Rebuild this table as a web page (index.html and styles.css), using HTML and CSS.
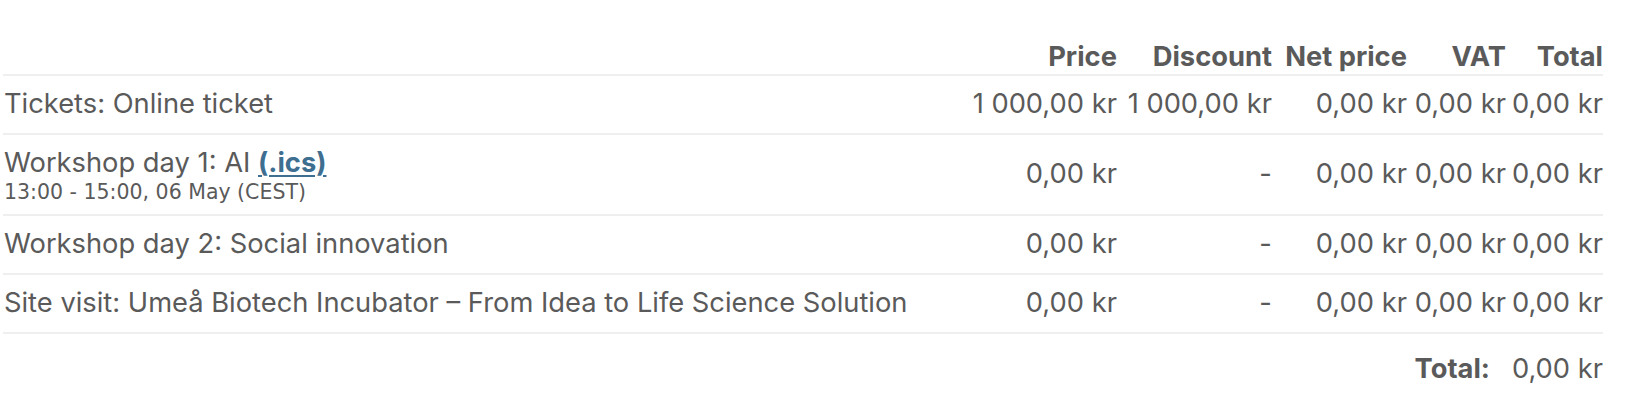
FILE: index.html
```html
<!DOCTYPE html>
<html lang="en">
<head>
<meta charset="utf-8">
<title>Order summary</title>
<link rel="stylesheet" href="styles.css">
</head>
<body>
<div class="order">
  <table class="order-table">
    <thead>
      <tr>
        <th class="col-desc"></th>
        <th class="num">Price</th>
        <th class="num w-discount">Discount</th>
        <th class="num w-net">Net price</th>
        <th class="num w-vat">VAT</th>
        <th class="num w-total">Total</th>
      </tr>
    </thead>
    <tbody>
      <tr>
        <td class="col-desc">Tickets: Online ticket</td>
        <td class="num">1&nbsp;000,00&nbsp;kr</td>
        <td class="num">1&nbsp;000,00&nbsp;kr</td>
        <td class="num">0,00&nbsp;kr</td>
        <td class="num">0,00&nbsp;kr</td>
        <td class="num">0,00&nbsp;kr</td>
      </tr>
      <tr>
        <td class="col-desc">
          <div>Workshop day 1: AI <a class="ics" href="#">(.ics)</a></div>
          <div class="when">13:00 - 15:00, 06 May (CEST)</div>
        </td>
        <td class="num">0,00&nbsp;kr</td>
        <td class="num">-</td>
        <td class="num">0,00&nbsp;kr</td>
        <td class="num">0,00&nbsp;kr</td>
        <td class="num">0,00&nbsp;kr</td>
      </tr>
      <tr>
        <td class="col-desc">Workshop day 2: Social innovation</td>
        <td class="num">0,00&nbsp;kr</td>
        <td class="num">-</td>
        <td class="num">0,00&nbsp;kr</td>
        <td class="num">0,00&nbsp;kr</td>
        <td class="num">0,00&nbsp;kr</td>
      </tr>
      <tr>
        <td class="col-desc">Site visit: Umeå Biotech Incubator – From Idea to Life Science Solution</td>
        <td class="num">0,00&nbsp;kr</td>
        <td class="num">-</td>
        <td class="num">0,00&nbsp;kr</td>
        <td class="num">0,00&nbsp;kr</td>
        <td class="num">0,00&nbsp;kr</td>
      </tr>
    </tbody>
    <tfoot>
      <tr>
        <th class="total-label" colspan="5">Total:</th>
        <td class="num total-value">0,00&nbsp;kr</td>
      </tr>
    </tfoot>
  </table>
</div>
</body>
</html>
```
FILE: styles.css
```css
html, body {
  margin: 0;
  padding: 0;
  background: #ffffff;
}

body {
  font-family: "Inter", "Liberation Sans", sans-serif;
  font-size: 27.3px;
  color: #5a5a5a;
}

.order {
  padding: 30px 0 0 3px;
  width: 1600px;
}

.order-table {
  width: 1600px;
  border-collapse: collapse;
  border-spacing: 0;
}

.order-table th,
.order-table td {
  line-height: 36px;
  padding: 0;
  vertical-align: middle;
}

.order-table thead th {
  font-weight: 700;
  line-height: 34px;
  padding: 10px 0 0 6px;
  border-bottom: 2px solid #efefef;
}

.order-table tbody td {
  padding: 10px 0 11px 6px;
  border-bottom: 2px solid #efefef;
}

.order-table .col-desc {
  text-align: left;
  padding-left: 1px;
}

.order-table .num {
  width: 1px;
  white-space: nowrap;
  text-align: right;
}

.order-table .w-discount { width: 149px; }
.order-table .w-net { width: 129px; }
.order-table .w-vat { width: 93px; }
.order-table .w-total { width: 91px; }

.ics {
  color: #3e6e90;
  font-weight: 700;
  text-decoration: underline;
  text-underline-offset: 3px;
  text-decoration-thickness: 2px;
}

.when {
  font-family: "DejaVu Sans", "Verdana", sans-serif;
  font-size: 20.5px;
  line-height: 22px;
}

.order-table tfoot th,
.order-table tfoot td {
  padding-top: 17px;
}

.total-label {
  font-weight: 700;
  text-align: right;
  padding-right: 16px !important;
}

.total-value {
  padding-left: 6px;
}
```
